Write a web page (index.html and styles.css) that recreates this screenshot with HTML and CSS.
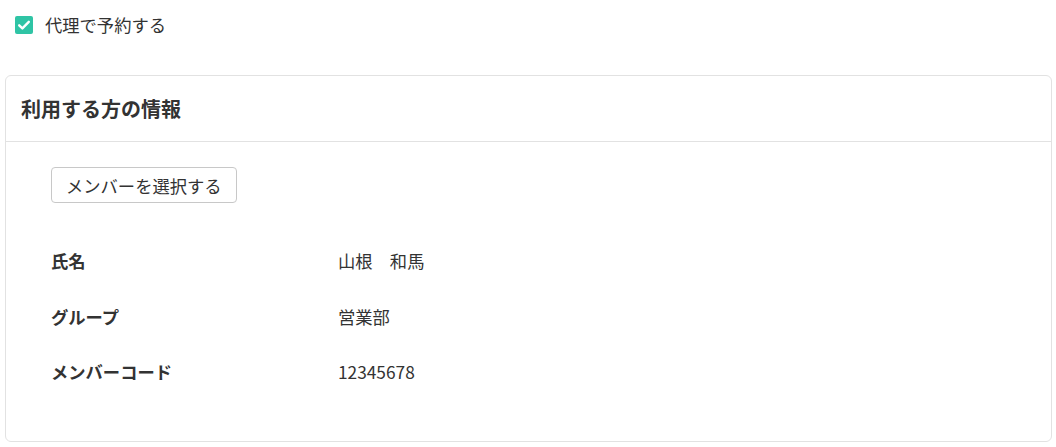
FILE: index.html
```html
<!DOCTYPE html>
<html lang="ja">
<head>
<meta charset="utf-8">
<link rel="stylesheet" href="styles.css">
</head>
<body>
<div class="top">
  <label class="check">
    <span class="box"><svg width="18" height="18" viewBox="0 0 18 18"><path d="M4.2 9.3 L7.4 12.4 L13.8 5.8" fill="none" stroke="#fff" stroke-width="2.4" stroke-linecap="round" stroke-linejoin="round"/></svg></span>
    <span class="check-label">代理で予約する</span>
  </label>
</div>
<section class="card">
  <div class="card-header"><h2>利用する方の情報</h2></div>
  <div class="card-body">
    <button class="btn">メンバーを選択する</button>
    <dl class="info">
      <dt>氏名</dt><dd>山根　和馬</dd>
      <dt>グループ</dt><dd>営業部</dd>
      <dt>メンバーコード</dt><dd>12345678</dd>
    </dl>
  </div>
</section>
</body>
</html>
```
FILE: styles.css
```css
* { box-sizing: border-box; }
body {
  margin: 0;
  font-family: "Noto Sans CJK JP", "Noto Sans", sans-serif;
  color: #333;
  background: #fff;
}
.top {
  padding: 13px 15px 0;
  height: 75px;
}
.check {
  display: flex;
  align-items: center;
  gap: 12px;
  font-size: 17.3px;
  line-height: 24px;
}
.box {
  width: 18px;
  height: 18px;
  border-radius: 2px;
  background: #2fc4a5;
  display: block;
}
.box svg { display: block; }
.card {
  margin: 0 4px 0 5px;
  border: 1px solid #e2e2e2;
  border-radius: 6px;
  height: 367px;
}
.card-header {
  border-bottom: 1px solid #e2e2e2;
  height: 66px;
  padding: 0 15px;
  display: flex;
  align-items: center;
}
.card-header h2 {
  margin: 0;
  font-size: 20px;
  font-weight: 700;
  color: #333;
}
.card-body {
  padding: 25px 45px 0;
}
.btn {
  font-family: inherit;
  font-size: 17.3px;
  color: #333;
  background: #fff;
  border: 1px solid #c8c8c8;
  border-radius: 4px;
  height: 36px;
  padding: 0 14px;
  display: block;
}
.info {
  margin: 30px 0 0;
  display: grid;
  grid-template-columns: 287px 1fr;
  grid-auto-rows: 55.5px;
  align-items: center;
  font-size: 17.3px;
}
.info dt { font-weight: 700; }
.info dd { margin: 0; }
```
